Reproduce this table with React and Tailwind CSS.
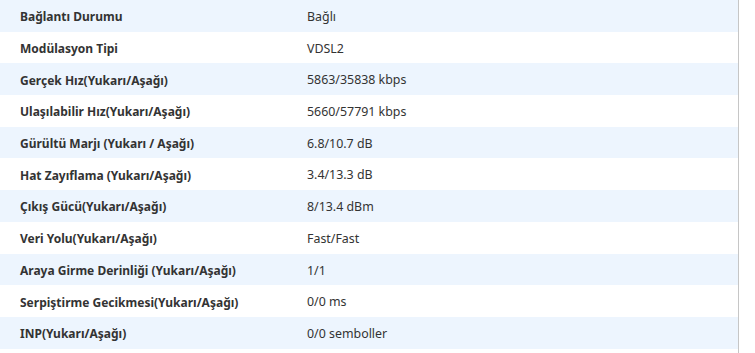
const satirlar = [
  ['Bağlantı Durumu', 'Bağlı'],
  ['Modülasyon Tipi', 'VDSL2'],
  ['Gerçek Hız(Yukarı/Aşağı)', '5863/35838 kbps'],
  ['Ulaşılabilir Hız(Yukarı/Aşağı)', '5660/57791 kbps'],
  ['Gürültü Marjı (Yukarı / Aşağı)', '6.8/10.7 dB'],
  ['Hat Zayıflama (Yukarı/Aşağı)', '3.4/13.3 dB'],
  ['Çıkış Gücü(Yukarı/Aşağı)', '8/13.4 dBm'],
  ['Veri Yolu(Yukarı/Aşağı)', 'Fast/Fast'],
  ['Araya Girme Derinliği (Yukarı/Aşağı)', '1/1'],
  ['Serpiştirme Gecikmesi(Yukarı/Aşağı)', '0/0 ms'],
  ['INP(Yukarı/Aşağı)', '0/0 semboller'],
];

export default function App() {
  return (
    <div className="w-[755px] h-[353px] bg-white overflow-hidden text-[#333]"
      style={{ fontFamily: '"Noto Sans", "Liberation Sans", sans-serif' }}>
      <div className="w-[739px] h-full border-r border-[#c6c6c6]">
        {satirlar.map(([etiket, deger], i) => (
          <div key={etiket}
            className={`flex items-center h-[31.7px] pt-[3px] ${i % 2 === 0 ? 'bg-[#edf5fe]' : 'bg-white'}`}>
            <div className="w-[307px] pl-5 font-bold text-[12px]">{etiket}</div>
            <div className="flex-1 text-[12.4px]">{deger}</div>
          </div>
        ))}
      </div>
    </div>
  );
}
